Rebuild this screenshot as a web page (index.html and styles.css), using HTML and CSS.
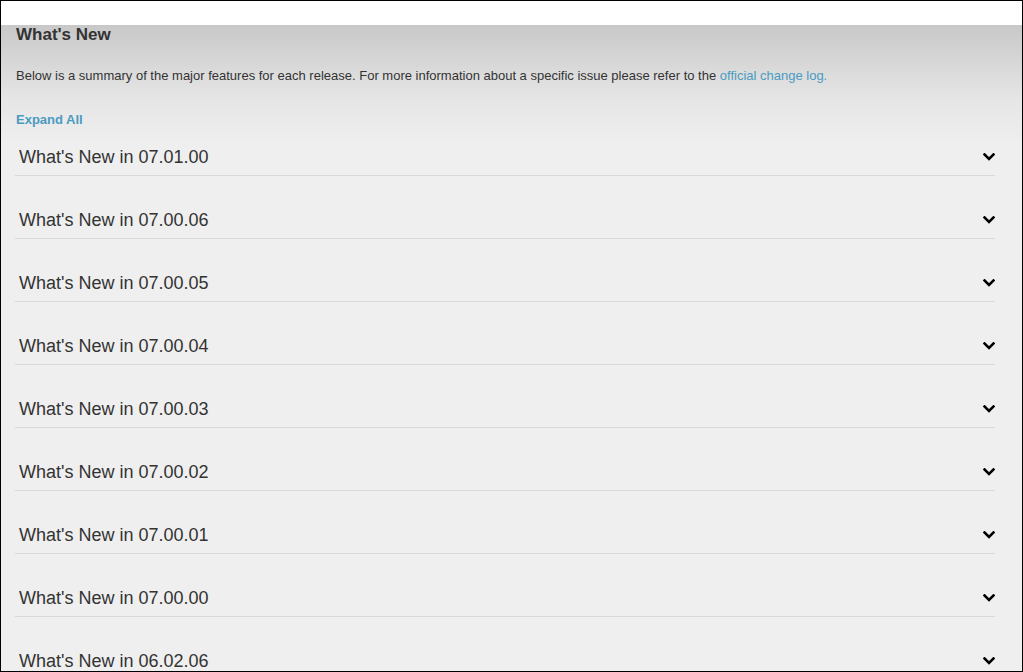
FILE: index.html
```html
<!DOCTYPE html>
<html>
<head>
<meta charset="utf-8">
<link rel="stylesheet" href="styles.css">
</head>
<body>
<div class="frame">
  <div class="topbar"></div>
  <main class="main">
    <h1 class="title">What's New</h1>
    <p class="intro">Below is a summary of the major features for each release. For more information about a specific issue please refer to the <a class="link" href="#">official change log.</a></p>
    <a class="expand" href="#">Expand All</a>
    <div class="list">
      <div class="row"><span class="row-title">What's New in 07.01.00</span><svg class="chev" viewBox="0 0 12 8"><polyline points="1.5,1.5 6,6 10.5,1.5"/></svg></div>
      <div class="row"><span class="row-title">What's New in 07.00.06</span><svg class="chev" viewBox="0 0 12 8"><polyline points="1.5,1.5 6,6 10.5,1.5"/></svg></div>
      <div class="row"><span class="row-title">What's New in 07.00.05</span><svg class="chev" viewBox="0 0 12 8"><polyline points="1.5,1.5 6,6 10.5,1.5"/></svg></div>
      <div class="row"><span class="row-title">What's New in 07.00.04</span><svg class="chev" viewBox="0 0 12 8"><polyline points="1.5,1.5 6,6 10.5,1.5"/></svg></div>
      <div class="row"><span class="row-title">What's New in 07.00.03</span><svg class="chev" viewBox="0 0 12 8"><polyline points="1.5,1.5 6,6 10.5,1.5"/></svg></div>
      <div class="row"><span class="row-title">What's New in 07.00.02</span><svg class="chev" viewBox="0 0 12 8"><polyline points="1.5,1.5 6,6 10.5,1.5"/></svg></div>
      <div class="row"><span class="row-title">What's New in 07.00.01</span><svg class="chev" viewBox="0 0 12 8"><polyline points="1.5,1.5 6,6 10.5,1.5"/></svg></div>
      <div class="row"><span class="row-title">What's New in 07.00.00</span><svg class="chev" viewBox="0 0 12 8"><polyline points="1.5,1.5 6,6 10.5,1.5"/></svg></div>
      <div class="row"><span class="row-title">What's New in 06.02.06</span><svg class="chev" viewBox="0 0 12 8"><polyline points="1.5,1.5 6,6 10.5,1.5"/></svg></div>
    </div>
  </main>
</div>
</body>
</html>
```

FILE: styles.css
```css
html, body {
  margin: 0;
  padding: 0;
  background: #fff;
}
body {
  font-family: "Liberation Sans", Arial, sans-serif;
  color: #333;
}
.frame {
  box-sizing: border-box;
  width: 1023px;
  height: 672px;
  border: 1px solid #000;
  overflow: hidden;
  display: flex;
  flex-direction: column;
  background: #fff;
}
.topbar {
  height: 24px;
  flex: none;
  background: #fff;
}
.main {
  flex: 1;
  padding: 0 27px 0 15px;
  background: linear-gradient(#c8c8c8 0, #e6e6e6 75px, #efefef 120px, #efefef 100%);
  display: flex;
  flex-direction: column;
  align-items: flex-start;
}
.title {
  margin: 1px 0 0;
  font-size: 17px;
  line-height: 18px;
  font-weight: bold;
  color: #333;
}
.intro {
  margin: 24px 0 0;
  font-size: 13px;
  line-height: 16px;
  color: #333;
}
.link {
  color: #4a9bc1;
  text-decoration: none;
}
.expand {
  margin-top: 28px;
  font-size: 13px;
  line-height: 16px;
  font-weight: bold;
  color: #4a9bc1;
  text-decoration: none;
}
.list {
  margin: 17px 0 0 -1px;
  align-self: stretch;
  display: flex;
  flex-direction: column;
  gap: 32px;
}
.row {
  display: flex;
  align-items: center;
  justify-content: space-between;
  padding: 0 0 6px 4px;
  border-bottom: 1px solid #d9d9d9;
  flex: none;
}
.row-title {
  font-size: 18px;
  line-height: 24px;
  color: #333;
}
.chev {
  width: 12px;
  height: 8px;
  fill: none;
  stroke: #000;
  stroke-width: 2.6;
  stroke-linecap: square;
}
```
